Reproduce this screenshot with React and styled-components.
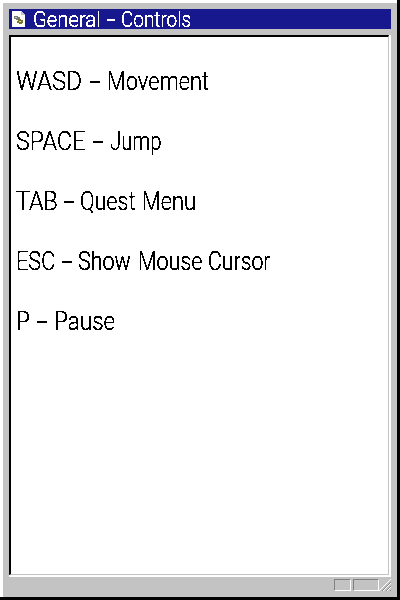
import React from "react";
import styled, { createGlobalStyle } from "styled-components";

const GlobalStyle = createGlobalStyle`
  * { box-sizing: border-box; }
  body { margin: 0; background: #000; }
`;

const Window = styled.main`
  width: 400px;
  height: 600px;
  background: #000;
  padding: 0 3px 3px 0;
  font-family: Roboto, "Liberation Sans", sans-serif;
  font-weight: 300;
`;

const Face = styled.div`
  width: 397px;
  height: 597px;
  background: #c3c3c3;
  border-top: 3px solid #fff;
  border-left: 3px solid #fff;
  padding: 6px;
  display: flex;
  flex-direction: column;
`;

const TitleBar = styled.header`
  height: 20px;
  width: 382px;
  background: #18188e;
  color: #fff;
  display: flex;
  align-items: center;
  padding-left: 3px;
`;

const TitleText = styled.h1`
  margin: 2px 0 0 8px;
  font-size: 22px;
  font-weight: inherit;
  line-height: 20px;
  display: flex;
`;

const Panel = styled.div`
  margin-top: 6px;
  width: 382px;
  height: 542px;
  border-right: 2px solid #fff;
  border-bottom: 2px solid #fff;
`;

const Content = styled.section`
  height: 540px;
  background: #fff;
  border-style: solid;
  border-color: #000 #c3c3c3 #c3c3c3 #000;
  border-width: 2px 1px 1px 2px;
  padding: 15px 0 0 5px;
`;

const Line = styled.p`
  margin: 0;
  height: 60px;
  line-height: 60px;
  font-size: 25px;
  display: flex;
  white-space: nowrap;
  color: #000;
`;

const Word = styled.span`
  flex: none;
  width: ${(p) => p.$advance}px;
  white-space: nowrap;
  filter: url(#crisp);
`;

const Glyphs = styled.span`
  display: inline-block;
  transform: scaleX(${(p) => p.$stretch});
  transform-origin: 0 50%;
`;

const Dash = styled(Glyphs)`
  font-weight: 400;
  padding-top: 1px;
`;

const Status = styled.footer`
  display: flex;
  justify-content: flex-end;
  padding-top: 2px;
  height: 14px;
`;

const Cell = styled.div`
  width: ${(p) => p.$width}px;
  height: 12px;
  margin-right: ${(p) => p.$gap}px;
  border: 1px solid;
  border-color: #808080 #fff #fff #808080;
`;

const HiddenDefs = styled.svg`
  position: absolute;
`;

/* Each entry: text, advance to the next word, horizontal stretch. */
const title = [["General", 73, 0.92], ["–", 15, 0.72], ["Controls", 72, 0.86]];

const lines = [
  [["WASD", 73, 0.96], ["–", 18, 0.74], ["Movement", 105, 0.87]],
  [["SPACE", 76, 0.93], ["–", 18, 0.74], ["Jump", 55, 0.81]],
  [["TAB", 47, 0.93], ["–", 17, 0.74], ["Quest", 62, 0.86], ["Menu", 56, 0.87]],
  [["ESC", 45, 0.87], ["–", 17, 0.74], ["Show", 60, 0.86], ["Mouse", 70, 0.86], ["Cursor", 66, 0.85]],
  [["P", 20, 0.9], ["–", 18, 0.74], ["Pause", 64, 0.9]],
];

function CrispFilter() {
  return (
    <HiddenDefs width="0" height="0" aria-hidden="true">
      <filter id="crisp" x="-10%" y="-10%" width="130%" height="120%">
        <feComponentTransfer>
          <feFuncA type="discrete" tableValues="0 0 1 1 1 1 1" />
        </feComponentTransfer>
      </filter>
    </HiddenDefs>
  );
}

function Words({ items }) {
  return items.map(([text, advance, stretch], i) => {
    const Text = text === "–" ? Dash : Glyphs;
    return (
      <Word key={i} $advance={advance}>
        <Text $stretch={stretch}>{text}</Text>
      </Word>
    );
  });
}

function PageIcon() {
  return (
    <svg width="13" height="16" viewBox="0 0 13 16" shapeRendering="crispEdges">
      <path d="M0 0h9l4 4v12H0z" fill="#fff" />
      <path d="M9 0v4h4z" fill="#c3c3c3" />
      <path d="M2 5h4v1h2v2h1v2H6V9H4V8H2z" fill="#777a70" />
      <path d="M3 6h2v1H3z" fill="#ccc" />
      <path d="M6 8h3v1h2v3h-1v1H7v-1H5v-2h1z" fill="#77752c" />
      <path d="M7 10h2v1H7z" fill="#ddd98b" />
    </svg>
  );
}

function Grip() {
  return (
    <svg width="12" height="12" viewBox="0 0 12 12" shapeRendering="crispEdges">
      <path d="M0 12 12 0M4 12l8-8M8 12l4-4" stroke="#fff" />
      <path d="M1.5 12 12 1.5M5.5 12 12 5.5M9.5 12 12 9.5" stroke="#808080" strokeWidth="0.9" />
    </svg>
  );
}

export default function App() {
  return (
    <>
      <GlobalStyle />
      <CrispFilter />
      <Window>
        <Face>
          <TitleBar>
            <PageIcon />
            <TitleText>
              <Words items={title} />
            </TitleText>
          </TitleBar>
          <Panel>
            <Content>
              {lines.map((words, i) => (
                <Line key={i}>
                  <Words items={words} />
                </Line>
              ))}
            </Content>
          </Panel>
          <Status>
            <Cell $width={17} $gap={2} />
            <Cell $width={26} $gap={0} />
            <Grip />
          </Status>
        </Face>
      </Window>
    </>
  );
}
